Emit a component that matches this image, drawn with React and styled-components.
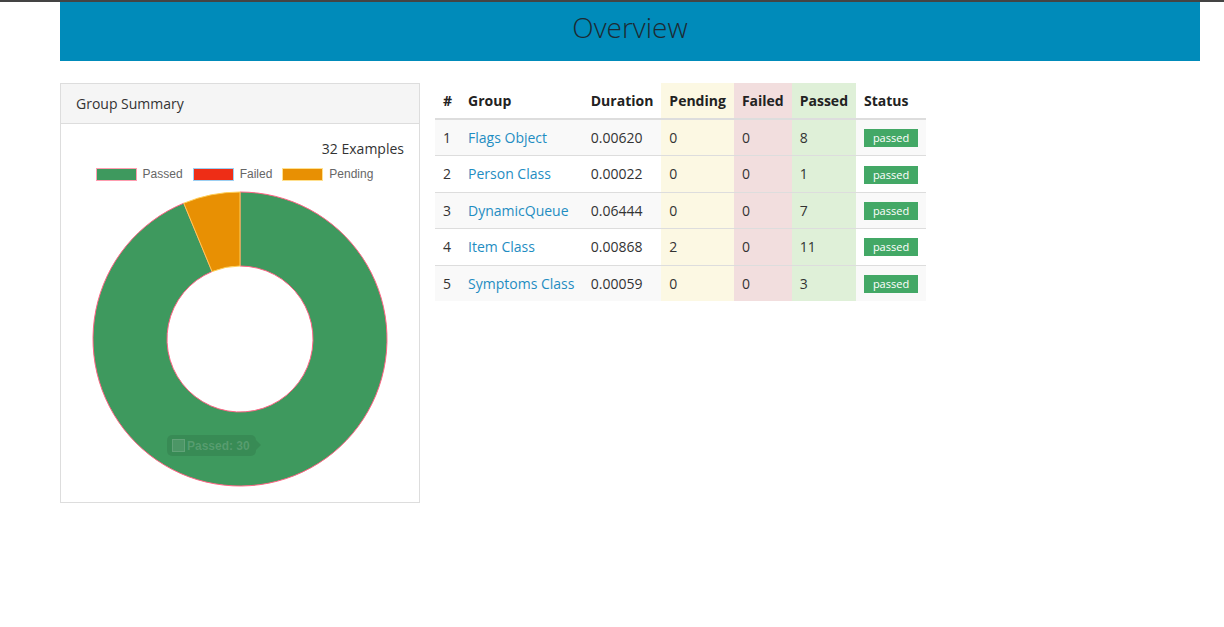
import React from "react";
import styled, { createGlobalStyle } from "styled-components";

const Global = createGlobalStyle`
  html, body { margin: 0; padding: 0; background: #fff; }
  body {
    border-top: 2px solid #444;
    font-family: "Open Sans", "Liberation Sans", sans-serif;
    font-size: 14px;
    line-height: 20px;
    color: #333;
  }
`;

const Page = styled.div`
  width: 1140px;
  margin-left: 60px;
`;

const Banner = styled.header`
  height: 59px;
  box-sizing: border-box;
  padding-bottom: 10px;
  background: #008bba;
  display: flex;
  align-items: center;
  justify-content: center;
`;

const Title = styled.h1`
  margin: 0;
  font-size: 28px;
  font-weight: 300;
  color: #1d2a33;
  line-height: 1;
`;

const Main = styled.main`
  display: flex;
  align-items: flex-start;
  gap: 15px;
  margin-top: 22px;
`;

const Panel = styled.section`
  width: 360px;
  box-sizing: border-box;
  border: 1px solid #ddd;
  background: #fff;
`;

const PanelHeading = styled.div`
  height: 40px;
  box-sizing: border-box;
  padding: 10px 15px;
  background: #f5f5f5;
  border-bottom: 1px solid #ddd;
  color: #333;
`;

const PanelBody = styled.div`
  padding: 15px 15px 13px;
  display: flex;
  flex-direction: column;
`;

const Examples = styled.div`
  text-align: right;
`;

const Legend = styled.ul`
  list-style: none;
  margin: 9px 0 0;
  padding: 0 11px 0 0;
  display: flex;
  justify-content: center;
  gap: 10px;
  font-family: "Liberation Sans", Arial, sans-serif;
  font-size: 12px;
  color: #666;
  line-height: 13px;
`;

const LegendItem = styled.li`
  display: flex;
  align-items: center;
  gap: 6px;
`;

const Swatch = styled.span`
  width: 39px;
  height: 11px;
  background: ${(p) => p.$fill};
  border: 1px solid ${(p) => p.$stroke};
`;

const ChartWrap = styled.div`
  position: relative;
  width: 300px;
  height: 300px;
  margin: 8px auto 0;
`;

const Tooltip = styled.div`
  position: absolute;
  left: 77px;
  top: 246px;
  height: 21px;
  padding: 0 6px 0 5px;
  display: flex;
  align-items: center;
  gap: 2px;
  border-radius: 5px;
  background: rgba(0, 0, 0, 0.09);
  color: rgba(255, 255, 255, 0.16);
  font-family: "Liberation Sans", Arial, sans-serif;
  font-weight: bold;
  font-size: 12px;
  &::after {
    content: "";
    position: absolute;
    right: -5px;
    top: 5px;
    border-style: solid;
    border-width: 5px 0 5px 5px;
    border-color: transparent transparent transparent rgba(0, 0, 0, 0.09);
  }
`;

const TipSwatch = styled.span`
  width: 11px;
  height: 11px;
  background: rgba(255, 255, 255, 0.1);
  border: 1px solid rgba(255, 255, 255, 0.12);
`;

const Table = styled.table`
  border-collapse: collapse;
  border-spacing: 0;
  width: 491px;
`;

const Th = styled.th`
  text-align: left;
  font-weight: 700;
  padding: 8px 8px 7px;
  line-height: 20px;
  white-space: nowrap;
  color: #222;
  border-bottom: 2px solid #ddd;
  background: ${(p) => p.$bg || "transparent"};
`;

const Tr = styled.tr`
  background: ${(p) => (p.$odd ? "#f9f9f9" : "#fff")};
`;

const Td = styled.td`
  padding: 8px;
  line-height: 19.4px;
  white-space: nowrap;
  border-top: 1px solid #ddd;
  vertical-align: middle;
  background: ${(p) => p.$bg || "transparent"};
`;

const Link = styled.a`
  color: #1f8dc2;
  text-decoration: none;
`;

const Badge = styled.span`
  display: block;
  width: 54px;
  height: 18px;
  margin: 1px 0 0;
  line-height: 18px;
  text-align: center;
  background: #43a866;
  color: #fff;
  font-size: 11px;
`;

const COLORS = {
  pending: "#fcf8e3",
  failed: "#f2dede",
  passed: "#dff0d8",
};

const rows = [
  { n: 1, g: "Flags Object", d: "0.00620", p: 0, f: 0, s: 8 },
  { n: 2, g: "Person Class", d: "0.00022", p: 0, f: 0, s: 1 },
  { n: 3, g: "DynamicQueue", d: "0.06444", p: 0, f: 0, s: 7 },
  { n: 4, g: "Item Class", d: "0.00868", p: 2, f: 0, s: 11 },
  { n: 5, g: "Symptoms Class", d: "0.00059", p: 0, f: 0, s: 3 },
];

function Donut() {
  return (
    <svg width="300" height="300" viewBox="0 0 300 300">
      <path
        d="M150 3 A147 147 0 1 1 93.75 14.19 L122.06 82.56 A73 73 0 1 0 150 77 Z"
        fill="#3e995e"
        stroke="#ff6384"
        strokeWidth="1"
      />
      <path
        d="M93.75 14.19 A147 147 0 0 1 150 3 L150 77 A73 73 0 0 0 122.06 82.56 Z"
        fill="#e89003"
        stroke="#ffce56"
        strokeWidth="1"
      />
    </svg>
  );
}

export default function App() {
  return (
    <>
      <Global />
      <Page>
        <Banner>
          <Title>Overview</Title>
        </Banner>
        <Main>
          <Panel>
            <PanelHeading>Group Summary</PanelHeading>
            <PanelBody>
              <Examples>32 Examples</Examples>
              <Legend>
                <LegendItem>
                  <Swatch $fill="#3e995e" $stroke="#ff9db0" />
                  Passed
                </LegendItem>
                <LegendItem>
                  <Swatch $fill="#ee2d16" $stroke="#9ccff2" />
                  Failed
                </LegendItem>
                <LegendItem>
                  <Swatch $fill="#e89003" $stroke="#ffe08f" />
                  Pending
                </LegendItem>
              </Legend>
              <ChartWrap>
                <Donut />
                <Tooltip>
                  <TipSwatch />
                  Passed: 30
                </Tooltip>
              </ChartWrap>
            </PanelBody>
          </Panel>
          <Table>
            <thead>
              <tr>
                <Th style={{ width: 9 }}>#</Th>
                <Th style={{ width: 107 }}>Group</Th>
                <Th>Duration</Th>
                <Th $bg={COLORS.pending}>Pending</Th>
                <Th $bg={COLORS.failed}>Failed</Th>
                <Th $bg={COLORS.passed}>Passed</Th>
                <Th>Status</Th>
              </tr>
            </thead>
            <tbody>
              {rows.map((r, i) => (
                <Tr key={r.n} $odd={i % 2 === 0}>
                  <Td>{r.n}</Td>
                  <Td>
                    <Link href="#">{r.g}</Link>
                  </Td>
                  <Td>{r.d}</Td>
                  <Td $bg={COLORS.pending}>{r.p}</Td>
                  <Td $bg={COLORS.failed}>{r.f}</Td>
                  <Td $bg={COLORS.passed}>{r.s}</Td>
                  <Td>
                    <Badge>passed</Badge>
                  </Td>
                </Tr>
              ))}
            </tbody>
          </Table>
        </Main>
      </Page>
    </>
  );
}
